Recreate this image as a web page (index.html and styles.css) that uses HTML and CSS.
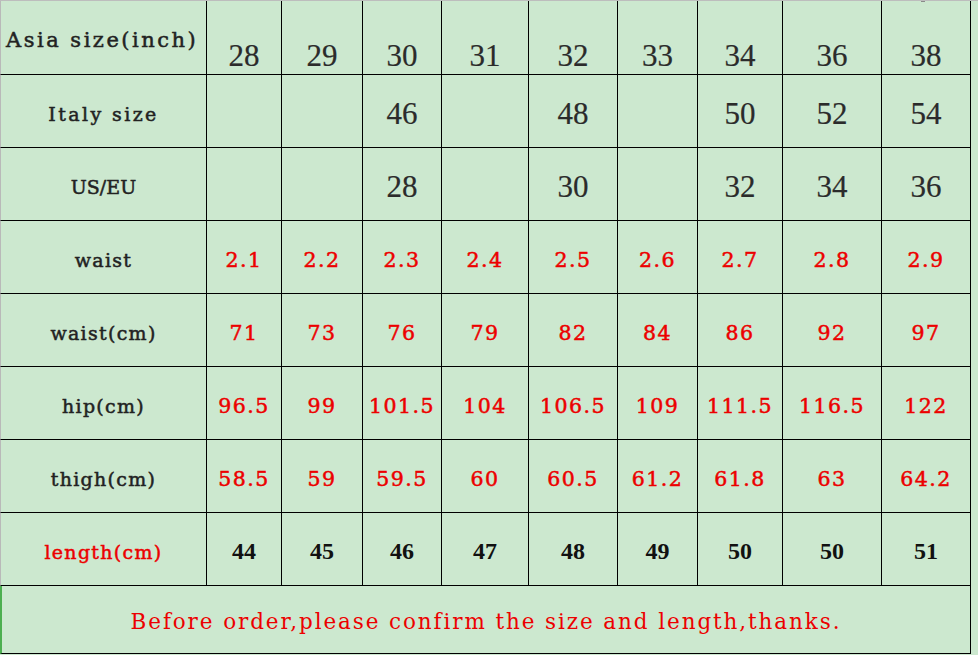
FILE: index.html
```html
<!DOCTYPE html>
<html>
<head>
<meta charset="utf-8">
<link rel="stylesheet" href="styles.css">
</head>
<body>
<div class="sheet">
  <div class="grid">
    <div class="cell label head">Asia size(inch)</div>
    <div class="cell big top">28</div>
    <div class="cell big top">29</div>
    <div class="cell big top">30</div>
    <div class="cell big top">31</div>
    <div class="cell big top">32</div>
    <div class="cell big top">33</div>
    <div class="cell big top">34</div>
    <div class="cell big top">36</div>
    <div class="cell big top">38</div>

    <div class="cell label small wide">Italy size</div>
    <div class="cell big"></div>
    <div class="cell big"></div>
    <div class="cell big">46</div>
    <div class="cell big"></div>
    <div class="cell big">48</div>
    <div class="cell big"></div>
    <div class="cell big">50</div>
    <div class="cell big">52</div>
    <div class="cell big">54</div>

    <div class="cell label small tight">US/EU</div>
    <div class="cell big"></div>
    <div class="cell big"></div>
    <div class="cell big">28</div>
    <div class="cell big"></div>
    <div class="cell big">30</div>
    <div class="cell big"></div>
    <div class="cell big">32</div>
    <div class="cell big">34</div>
    <div class="cell big">36</div>

    <div class="cell label small">waist</div>
    <div class="cell red">2.1</div>
    <div class="cell red">2.2</div>
    <div class="cell red">2.3</div>
    <div class="cell red">2.4</div>
    <div class="cell red">2.5</div>
    <div class="cell red">2.6</div>
    <div class="cell red">2.7</div>
    <div class="cell red">2.8</div>
    <div class="cell red">2.9</div>

    <div class="cell label small">waist(cm)</div>
    <div class="cell red">71</div>
    <div class="cell red">73</div>
    <div class="cell red">76</div>
    <div class="cell red">79</div>
    <div class="cell red">82</div>
    <div class="cell red">84</div>
    <div class="cell red">86</div>
    <div class="cell red">92</div>
    <div class="cell red">97</div>

    <div class="cell label small">hip(cm)</div>
    <div class="cell red">96.5</div>
    <div class="cell red">99</div>
    <div class="cell red">101.5</div>
    <div class="cell red">104</div>
    <div class="cell red">106.5</div>
    <div class="cell red">109</div>
    <div class="cell red">111.5</div>
    <div class="cell red">116.5</div>
    <div class="cell red">122</div>

    <div class="cell label small">thigh(cm)</div>
    <div class="cell red">58.5</div>
    <div class="cell red">59</div>
    <div class="cell red">59.5</div>
    <div class="cell red">60</div>
    <div class="cell red">60.5</div>
    <div class="cell red">61.2</div>
    <div class="cell red">61.8</div>
    <div class="cell red">63</div>
    <div class="cell red">64.2</div>

    <div class="cell label small red-label">length(cm)</div>
    <div class="cell dark">44</div>
    <div class="cell dark">45</div>
    <div class="cell dark">46</div>
    <div class="cell dark">47</div>
    <div class="cell dark">48</div>
    <div class="cell dark">49</div>
    <div class="cell dark">50</div>
    <div class="cell dark">50</div>
    <div class="cell dark">51</div>

    <div class="cell note">Before order,please confirm the size and length,thanks.</div>
  </div>
  <span class="tick"></span>
</div>
</body>
</html>
```
FILE: styles.css
```css
html, body {
  margin: 0;
  padding: 0;
  background: #cce8cf;
}
.sheet {
  position: relative;
  width: 978px;
  height: 655px;
  background: #cce8cf;
  border-top: 1px solid #bdbdbd;
  box-sizing: border-box;
  overflow: hidden;
}
.tick {
  position: absolute;
  left: 921px;
  top: -1px;
  width: 4px;
  height: 2px;
  background: #8a8a8a;
}
.grid {
  display: grid;
  grid-template-columns: 207px 75px 81px 79px 87px 89px 80px 85px 99px 89px;
  grid-template-rows: 74px repeat(7, 73px) 68px;
  width: 971px;
}
.cell {
  box-sizing: border-box;
  border-right: 1px solid #000;
  border-bottom: 1px solid #000;
  display: flex;
  align-items: center;
  justify-content: center;
  padding-top: 5px;
  white-space: nowrap;
}
.label {
  border-left: 1px solid #b9b9b9;
  font-family: "DejaVu Serif", serif;
  color: #222;
  -webkit-text-stroke: 0.5px currentColor;
}
.head {
  font-size: 21px;
  letter-spacing: 2.5px;
  padding-top: 5px;
  padding-bottom: 0;
  justify-content: flex-start;
  padding-left: 5px;
}
.small {
  font-size: 19px;
  letter-spacing: 1.3px;
}
.small.wide {
  letter-spacing: 2.4px;
}
.small.tight {
  letter-spacing: 0;
}
.red-label {
  color: #ec0000;
}
.big {
  font-family: "Liberation Serif", serif;
  font-size: 31px;
  color: #2b2b2b;
  -webkit-text-stroke: 0.2px currentColor;
}
.top {
  padding-top: 36px;
}
.red {
  font-family: "DejaVu Serif", serif;
  font-size: 20.5px;
  letter-spacing: 1.5px;
  color: #ec0000;
  -webkit-text-stroke: 0.5px currentColor;
}
.dark {
  font-family: "Liberation Serif", serif;
  font-weight: bold;
  font-size: 24px;
  color: #111;
}
.note {
  grid-column: 1 / -1;
  border-left: 2px solid #4caf50;
  font-family: "DejaVu Serif", serif;
  font-size: 21.5px;
  letter-spacing: 1.9px;
  color: #ec0000;
  padding-top: 3px;
}
```
